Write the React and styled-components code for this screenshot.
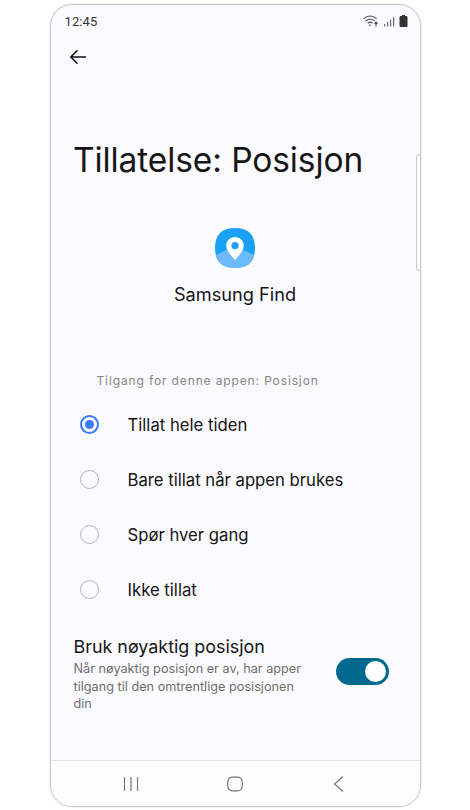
import React from 'react';
import styled, { createGlobalStyle } from 'styled-components';

const Global = createGlobalStyle`
  html, body { margin: 0; padding: 0; background: #fff; font-family: "Inter", "Roboto", sans-serif; }
  body { width: 470px; height: 810px; overflow: hidden; }
`;
const Stage = styled.div`
  width: 470px; height: 810px; display: flex; justify-content: center; padding-top: 4px; box-sizing: border-box;
`;
const Phone = styled.div`
  position: relative; width: 371px; height: 803px; box-sizing: border-box;
  border: 1px solid #c9c9c9; border-radius: 22px; background: #fbfaff;
  box-shadow: 0 0 0 1px rgba(205, 205, 205, .25);
  display: flex; flex-direction: column; overflow: visible;
`;
const SideKey = styled.div`
  position: absolute; right: -1px; top: 149px; width: 5px; height: 117px; box-sizing: border-box;
  border: 1px solid #c9c9c9; border-right: none; border-radius: 4px 0 0 4px;
`;
const StatusBar = styled.div`
  display: flex; align-items: center; justify-content: space-between;
  height: 32px; padding: 0 12px 0 14px; flex: none;
`;
const Clock = styled.span`font: 13px "Roboto", sans-serif; color: #333; letter-spacing: .1px;`;
const StatusIcons = styled.div`display: flex; align-items: center; gap: 4px;`;
const TopBar = styled.div`height: 40px; padding-left: 18px; display: flex; align-items: center; flex: none;`;
const Title = styled.h1`
  margin: 61px 0 0 22.5px; font: 400 33.5px/44px "Inter", sans-serif; color: #161616; letter-spacing: -.1px;
`;
const AppBlock = styled.div`display: flex; flex-direction: column; align-items: center; margin-top: 46px;`;
const AppName = styled.div`margin-top: 14px; font: 400 18.2px/24px "Inter", sans-serif; color: #161616;`;
const SectionLabel = styled.div`
  margin: 67px 0 0 46px; font: 400 12px/16px "Inter", sans-serif; color: #858585; letter-spacing: .87px;
`;
const Options = styled.div`display: flex; flex-direction: column; margin-top: 12px;`;
const Option = styled.div`
  height: 55px; display: flex; align-items: center; padding-left: 29px; gap: 29px;
  &:first-child { height: 47px; margin-bottom: 4px; }
`;
const Radio = styled.span`
  width: 19px; height: 19px; box-sizing: border-box; border-radius: 50%; flex: none;
  display: flex; align-items: center; justify-content: center;
  border: ${p => (p.$on ? '2px solid #3b7bf6' : '1.5px solid #b4b4b4')};
  &::after { content: ''; width: 9px; height: 9px; border-radius: 50%; background: ${p => (p.$on ? '#3b7bf6' : 'transparent')}; }
`;
const OptionText = styled.span`font: 400 16.7px/22px "Inter", sans-serif; color: #141414;`;
const ToggleRow = styled.div`display: flex; align-items: center; justify-content: space-between; padding: 0 31px 0 23px; margin-top: 19px;`;
const ToggleText = styled.div`width: 234px;`;
const ToggleTitle = styled.div`font: 400 17.9px/22px "Inter", sans-serif; color: #161616;`;
const ToggleDesc = styled.div`margin-top: 2px; font: 400 12.7px/17.5px "Inter", sans-serif; color: #6e6e6e;`;
const Toggle = styled.div`
  width: 53px; height: 27px; border-radius: 14px; background: #006a8e; display: flex; align-items: center;
  justify-content: flex-end; padding-right: 3px; box-sizing: border-box; margin-top: -6px;
`;
const Knob = styled.span`width: 21px; height: 21px; border-radius: 50%; background: #fff;`;
const NavBar = styled.div`
  margin-top: auto; height: 46px; flex: none; border-top: 1px solid #e2e2e5; background: #fdfdfe;
  border-radius: 0 0 21px 21px; display: grid; grid-template-columns: 1fr 1fr 1fr; align-items: center; justify-items: center;
  padding: 0 28.5px; box-sizing: border-box;
`;

export default function App() {
  return (
    <Stage>
      <Global />
      <Phone>
        <SideKey />
        <StatusBar>
          <Clock>12:45</Clock>
          <StatusIcons>
            <svg width="16" height="12" viewBox="0 0 16 12" fill="none" stroke="#444" strokeWidth="1.1" strokeLinecap="round">
              <path d="M1 3.6C4.6.2 9.6.2 13.2 3.4" />
              <path d="M3 5.8c2.6-2.3 5.600-2.300 8.200-.2" />
              <path d="M5 8c1.400-1.100 2.800-1.100 4.200 0" />
              <circle cx="7" cy="10.200" r=".8" fill="#444" stroke="none" />
              <path d="M13 11V7M11.700 8.300 13 7l1.300 1.300" />
            </svg>
            <svg width="12" height="11" viewBox="0 0 12 11" fill="#666">
              <rect x="1" y="8" width="1.200" height="2.500" />
              <rect x="4" y="6" width="1.200" height="4.500" />
              <rect x="7" y="3.500" width="1.200" height="7" />
              <rect x="10" y="1" width="1.200" height="9.500" />
            </svg>
            <svg width="9" height="12" viewBox="0 0 9 12" fill="#333">
              <path d="M3 0h3v1h1.200c.7 0 1.300.6 1.300 1.300v8.400c0 .7-.6 1.300-1.300 1.300H1.800C1.100 12 .5 11.400.5 10.700V2.300C.5 1.600 1.100 1 1.800 1H3z" />
            </svg>
          </StatusIcons>
        </StatusBar>
        <TopBar>
          <svg width="18" height="18" viewBox="0 0 18 18" fill="none" stroke="#111" strokeWidth="1.6" strokeLinecap="round" strokeLinejoin="round">
            <path d="M2 9h14.500M8 2.800 1.800 9 8 15.200" />
          </svg>
        </TopBar>
        <Title>Tillatelse: Posisjon</Title>
        <AppBlock>
          <svg width="40" height="40" viewBox="0 0 42 42">
            <defs>
              <clipPath id="sq"><path d="M21 0C35 0 42 7 42 21S35 42 21 42 0 35 0 21 7 0 21 0Z" /></clipPath>
            </defs>
            <g clipPath="url(#sq)">
              <rect width="42" height="42" fill="#1aa1f5" />
              <path d="M0 29 21 19 42 29V42H0Z" fill="#6cb9fb" />
            </g>
            <path d="M21 9.500c-5 0-9.200 3.800-9.200 8.800 0 5.800 5.800 11 8.400 14.600.4.500 1.200.5 1.600 0 2.600-3.600 8.400-8.800 8.400-14.600 0-5-4.200-8.800-9.200-8.800Z" fill="#fff" />
            <circle cx="21" cy="18.500" r="3.800" fill="#1aa1f5" />
          </svg>
          <AppName>Samsung Find</AppName>
        </AppBlock>
        <SectionLabel>Tilgang for denne appen: Posisjon</SectionLabel>
        <Options>
          <Option><Radio $on /><OptionText>Tillat hele tiden</OptionText></Option>
          <Option><Radio /><OptionText>Bare tillat når appen brukes</OptionText></Option>
          <Option><Radio /><OptionText>Spør hver gang</OptionText></Option>
          <Option><Radio /><OptionText>Ikke tillat</OptionText></Option>
        </Options>
        <ToggleRow>
          <ToggleText>
            <ToggleTitle>Bruk nøyaktig posisjon</ToggleTitle>
            <ToggleDesc>Når nøyaktig posisjon er av, har apper tilgang til den omtrentlige posisjonen din</ToggleDesc>
          </ToggleText>
          <Toggle><Knob /></Toggle>
        </ToggleRow>
        <NavBar>
          <svg width="16" height="16" viewBox="0 0 16 16" stroke="#777" strokeWidth="1.2" fill="none">
            <path d="M1.500 1v14M8 1v14M14.500 1v14" />
          </svg>
          <svg width="16" height="16" viewBox="0 0 16 16" stroke="#777" strokeWidth="1.2" fill="none">
            <rect x=".8" y="1.200" width="14.400" height="13.600" rx="4.500" />
          </svg>
          <svg width="16" height="16" viewBox="0 0 16 16" stroke="#777" strokeWidth="1.2" fill="none" strokeLinecap="round">
            <path d="M11.500 1 3.500 8l8 7" />
          </svg>
        </NavBar>
      </Phone>
    </Stage>
  );
}
